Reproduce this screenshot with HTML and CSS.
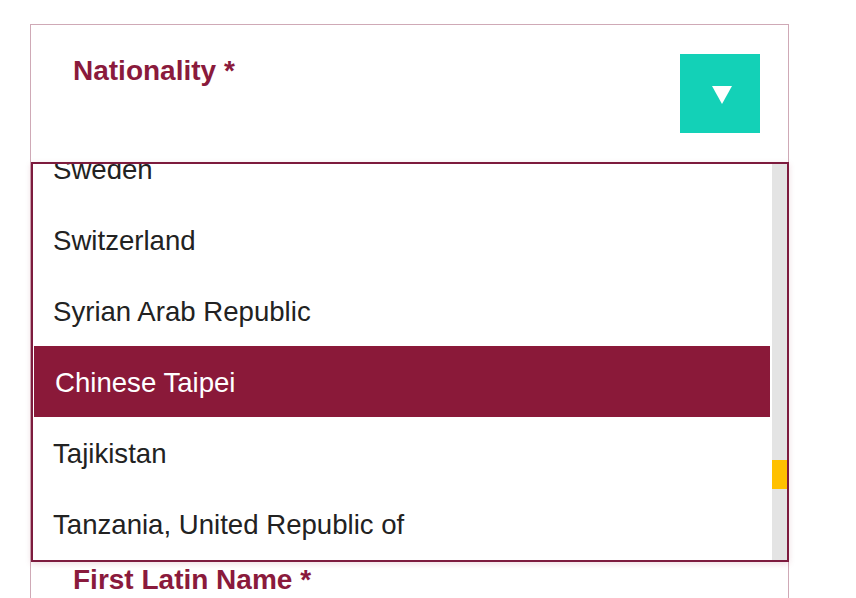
FILE: index.html
```html
<!DOCTYPE html>
<html lang="en">
<head>
<meta charset="UTF-8" />
<meta name="viewport" content="width=device-width, initial-scale=1" />
<title>Registration - Nationality</title>
<link rel="stylesheet" href="styles.css">
</head>
<body>

<div class="form-card">
  <div class="field field-select">
    <label class="field-label" for="nationality">Nationality *</label>
    <button class="select-toggle" id="nationality" type="button" aria-label="Open list">
      <span class="caret"></span>
    </button>
  </div>

  <div class="dropdown" role="listbox">
    <ul class="options">
      <li>Sweden</li>
      <li>Switzerland</li>
      <li>Syrian Arab Republic</li>
      <li class="selected">Chinese Taipei</li>
      <li>Tajikistan</li>
      <li>Tanzania, United Republic of</li>
      <li>Thailand</li>
      <li>Timor-Leste</li>
    </ul>
    <div class="scroll-track">
      <div class="scroll-thumb"></div>
    </div>
  </div>

  <div class="field">
    <label class="field-label">First Latin Name *</label>
  </div>
</div>

</body>
</html>
```

FILE: styles.css
```css
body {
  font-family: "Liberation Sans", Arial, Helvetica, sans-serif;
  background: #fff;
  margin: 0;
  padding: 0;
  color: #222;
}
.form-card {
  margin: 24px 0 0 30px;
  width: 757px;
  border: 1px solid #cfa9b6;
}
.field {
  padding: 4px 28px 40px 42px;
}
.field-select {
  display: flex;
  justify-content: space-between;
  align-items: flex-start;
  padding: 29px 28px 29px 42px;
}
.field-label {
  display: block;
  font-size: 28px;
  font-weight: bold;
  color: #8a1a3c;
  margin-top: -2px;
}
.field-select .field-label {
  margin-top: 1px;
}
.select-toggle {
  width: 80px;
  height: 79px;
  border: none;
  background: #13d1b7;
  display: flex;
  align-items: center;
  justify-content: center;
  padding: 0 0 0 3px;
  cursor: pointer;
}
.caret {
  width: 0;
  height: 0;
  border-left: 10px solid transparent;
  border-right: 10px solid transparent;
  border-top: 18px solid #fff;
  margin-top: 2px;
}
.dropdown {
  display: flex;
  height: 396px;
  overflow: hidden;
  border: 2px solid #7d1b3e;
  margin-right: -1px;
  background: #fff;
  box-shadow: 0 2px 6px rgba(138, 26, 60, 0.15);
}
.options {
  flex: 1;
  list-style: none;
  margin: -31px 0 0 0;
  padding: 0;
}
.options li {
  box-sizing: border-box;
  height: 71px;
  display: flex;
  align-items: center;
  padding: 3px 0 0 20px;
  font-size: 27.6px;
  color: #222;
}
.options li.selected {
  background: #8a1939;
  color: #fff;
  margin: 0 2px 0 1px;
  padding-left: 21px;
}
.scroll-track {
  flex: none;
  width: 15px;
  background: #e4e4e4;
}
.scroll-thumb {
  margin-top: 296px;
  height: 29px;
  background: #ffc000;
}
```
